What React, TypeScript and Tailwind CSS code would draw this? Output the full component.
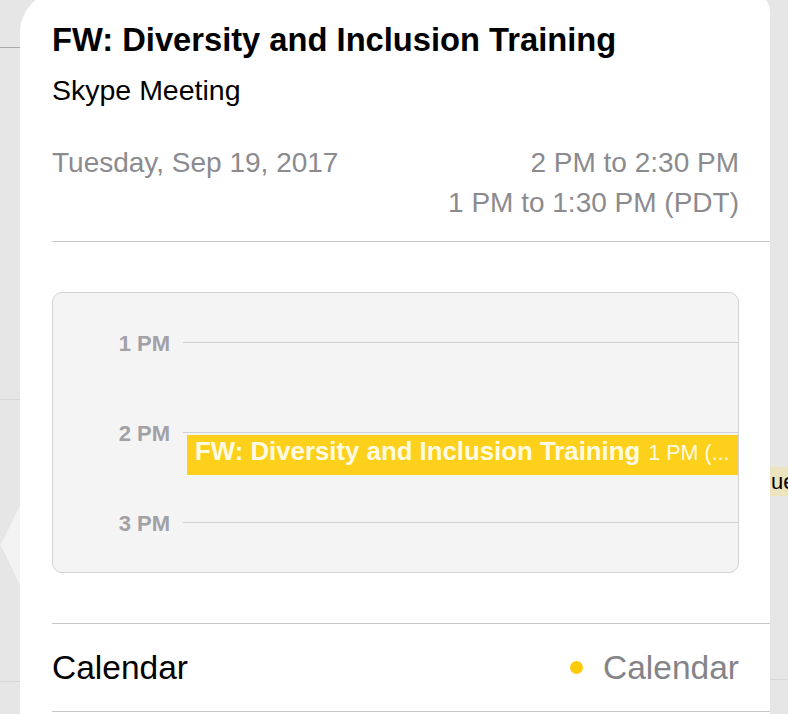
import React from "react";

const font = { fontFamily: '"Liberation Sans", Arial, sans-serif' };

// hour rows inside the day preview
const hours = ["1 PM", "2 PM", "3 PM"];

function DayPreview() {
  return (
    <div className="relative h-[281px] rounded-[10px] border border-[#d3d3d6] bg-[#f4f4f4] overflow-hidden">
      <div className="flex flex-col gap-[70px] pt-[39px]">
        {hours.map((h) => (
          <div key={h} className="flex h-[20px] items-center">
            <div className="w-[118px] shrink-0 pr-[1px] pt-[4px] text-right text-[22px] font-bold leading-[20px] text-[#a1a1a6]">
              {h}
            </div>
            <div className="ml-[12px] h-px flex-1 bg-[#d2d2d6]" />
          </div>
        ))}
      </div>
      {/* event block sits over the 2 PM line */}
      <div className="absolute left-[134px] right-0 top-[142px] h-[40px] overflow-hidden whitespace-nowrap bg-[#fdd01b] pl-[8px]">
        <div className="leading-[32px] text-[#fffbe3]">
          <span className="text-[25.8px] font-bold">FW: Diversity and Inclusion Training</span>
          <span className="ml-[8px] text-[21.5px]">1 PM (...</span>
        </div>
      </div>
    </div>
  );
}

export default function App() {
  return (
    <div className="relative flex h-[714px] w-[788px] overflow-hidden bg-[#e6e6e6]" style={font}>
      {/* left edge of the calendar behind */}
      <div className="relative w-[20px] shrink-0">
        <div className="mt-[47px] h-px bg-[#a9a9a9]" />
        <div className="mt-[351px] h-px bg-[#d6d6d6]" />
        <div className="mt-[281px] h-px bg-[#d6d6d6]" />
        <svg className="absolute left-0 top-[500px]" width="20" height="90" viewBox="0 0 20 90">
          <path d="M20 6 C16 12 6 36 0 45 C6 54 16 78 20 84 Z" fill="#f3f3f3" />
        </svg>
      </div>

      {/* popover card */}
      <div className="mt-[-8px] w-[750px] shrink-0 rounded-tl-[40px] rounded-tr-[20px] bg-white pl-[32px]">
        <div className="pr-[31px] pt-[28px]">
          <div className="text-[32.7px] font-bold leading-[40px] text-black">
            FW: Diversity and Inclusion Training
          </div>
          <div className="mt-[12px] text-[28.5px] leading-[36px] text-black">Skype Meeting</div>
          <div className="mt-[35px] flex justify-between text-[28px] leading-[40px] text-[#8b8b8f]">
            <div>Tuesday, Sep 19, 2017</div>
            <div className="text-right">
              <div>2 PM to 2:30 PM</div>
              <div>1 PM to 1:30 PM (PDT)</div>
            </div>
          </div>
        </div>
        <div className="mt-[18px] h-px bg-[#c8c7cc]" />

        <div className="mt-[50px] pr-[31px]">
          <DayPreview />
        </div>

        <div className="mt-[50px] h-px bg-[#c8c7cc]" />
        <div className="flex h-[87px] items-center justify-between pr-[31px]">
          <div className="text-[33.5px] leading-[34px] text-black">Calendar</div>
          <div className="flex items-center gap-[20px]">
            <div className="h-[13px] w-[13px] rounded-full bg-[#fecb0a]" />
            <div className="text-[33.5px] leading-[34px] text-[#848488]">Calendar</div>
          </div>
        </div>
        <div className="h-px bg-[#c8c7cc]" />
      </div>

      {/* right edge of the calendar behind */}
      <div className="w-[18px] shrink-0 overflow-hidden">
        <div className="mt-[467px] flex h-[29px] items-center bg-[#ece4bf] pl-[1px] text-[22px] leading-[29px] text-black">
          ue
        </div>
        <div className="mt-[183px] h-px bg-[#d6d6d6]" />
      </div>
    </div>
  );
}
